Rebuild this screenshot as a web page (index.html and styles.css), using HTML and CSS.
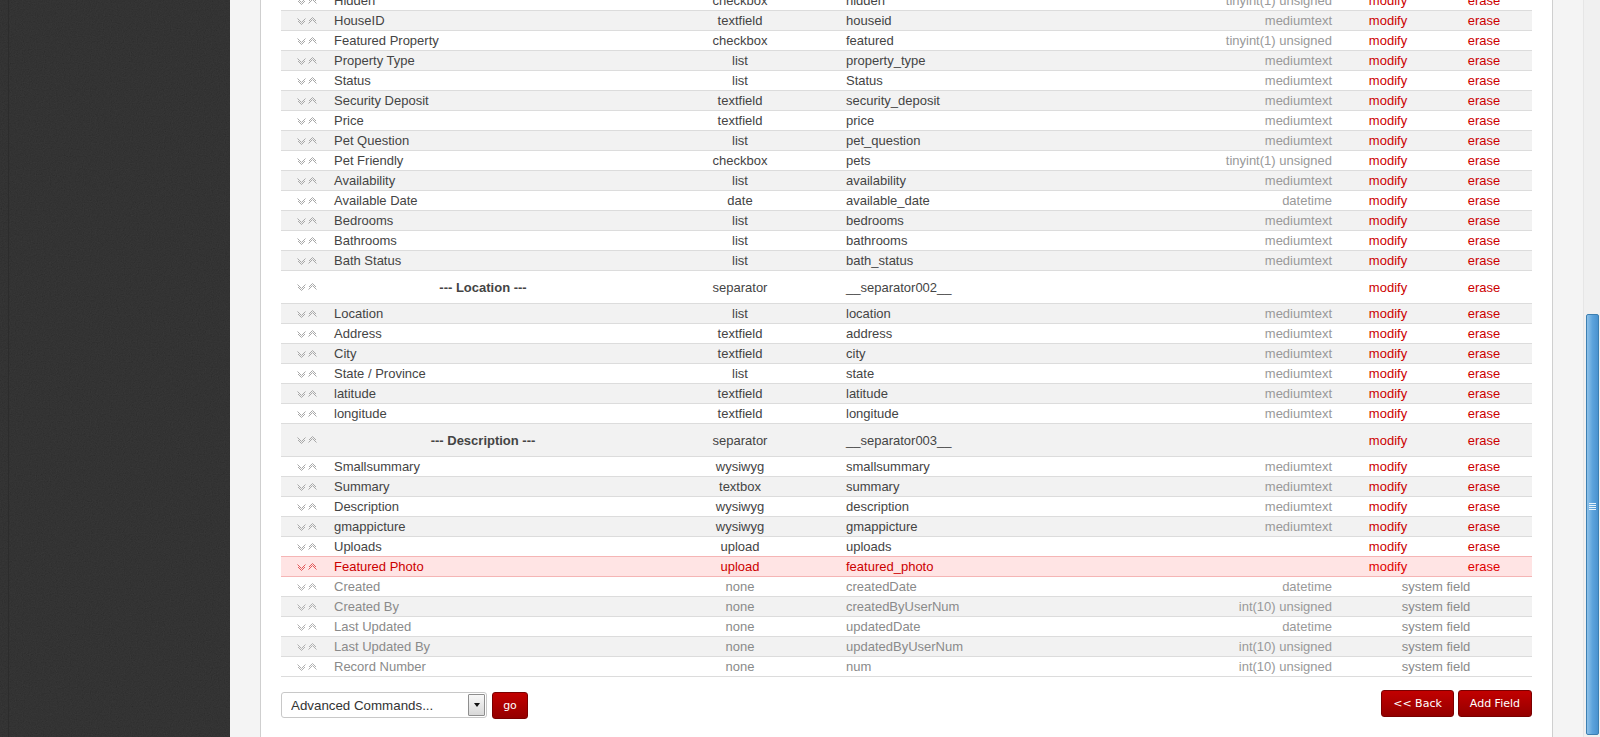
FILE: index.html
```html
<!DOCTYPE html>
<html lang="en">
<head>
    <meta charset="UTF-8">
    <meta name="viewport" content="width=device-width, initial-scale=1.0">
    <title>Section Editor - Fields</title>
    <link rel="stylesheet" href="styles.css">
</head>
<body>
    <div id="sidebar">
        <svg class="noise" width="230" height="737" aria-hidden="true">
            <filter id="grain">
                <feTurbulence type="fractalNoise" baseFrequency="0.85" numOctaves="2" stitchTiles="stitch"/>
                <feColorMatrix values="0.33 0.33 0.33 0 0  0.33 0.33 0.33 0 0  0.33 0.33 0.33 0 0  0 0 0 0 0.14"/>
            </filter>
            <rect width="230" height="737" fill="#1d1d1d"/>
            <rect width="230" height="737" filter="url(#grain)"/>
            <rect x="8" width="1" height="737" fill="#2c2c2c"/>
        </svg>
    </div>

    <div id="stage">
        <div id="panel">
            <svg width="0" height="0" class="defs" aria-hidden="true">
                <symbol id="updown" viewBox="0 0 20 8">
                    <path d="M0.5 1.5 L4.5 5.5 L8.5 1.5 M1 4 L4.5 7.5 L8 4" fill="none" stroke="currentColor" stroke-width="1"/>
                    <path d="M11.5 6.5 L15.5 2.5 L19.5 6.5 M12 4 L15.5 0.5 L19 4" fill="none" stroke="currentColor" stroke-width="1"/>
                </symbol>
            </svg>

            <table class="fields">
                <colgroup>
                    <col class="c-drag"><col class="c-label"><col class="c-ftype"><col class="c-fname"><col class="c-type"><col class="c-act"><col class="c-act">
                </colgroup>
                <tbody>
                    <tr><td class="drag"><svg><use href="#updown"/></svg></td><td>Hidden</td><td class="ftype">checkbox</td><td>hidden</td><td class="type">tinyint(1) unsigned</td><td class="act">modify</td><td class="act">erase</td></tr>
                    <tr><td class="drag"><svg><use href="#updown"/></svg></td><td>HouseID</td><td class="ftype">textfield</td><td>houseid</td><td class="type">mediumtext</td><td class="act">modify</td><td class="act">erase</td></tr>
                    <tr><td class="drag"><svg><use href="#updown"/></svg></td><td>Featured Property</td><td class="ftype">checkbox</td><td>featured</td><td class="type">tinyint(1) unsigned</td><td class="act">modify</td><td class="act">erase</td></tr>
                    <tr><td class="drag"><svg><use href="#updown"/></svg></td><td>Property Type</td><td class="ftype">list</td><td>property_type</td><td class="type">mediumtext</td><td class="act">modify</td><td class="act">erase</td></tr>
                    <tr><td class="drag"><svg><use href="#updown"/></svg></td><td>Status</td><td class="ftype">list</td><td>Status</td><td class="type">mediumtext</td><td class="act">modify</td><td class="act">erase</td></tr>
                    <tr><td class="drag"><svg><use href="#updown"/></svg></td><td>Security Deposit</td><td class="ftype">textfield</td><td>security_deposit</td><td class="type">mediumtext</td><td class="act">modify</td><td class="act">erase</td></tr>
                    <tr><td class="drag"><svg><use href="#updown"/></svg></td><td>Price</td><td class="ftype">textfield</td><td>price</td><td class="type">mediumtext</td><td class="act">modify</td><td class="act">erase</td></tr>
                    <tr><td class="drag"><svg><use href="#updown"/></svg></td><td>Pet Question</td><td class="ftype">list</td><td>pet_question</td><td class="type">mediumtext</td><td class="act">modify</td><td class="act">erase</td></tr>
                    <tr><td class="drag"><svg><use href="#updown"/></svg></td><td>Pet Friendly</td><td class="ftype">checkbox</td><td>pets</td><td class="type">tinyint(1) unsigned</td><td class="act">modify</td><td class="act">erase</td></tr>
                    <tr><td class="drag"><svg><use href="#updown"/></svg></td><td>Availability</td><td class="ftype">list</td><td>availability</td><td class="type">mediumtext</td><td class="act">modify</td><td class="act">erase</td></tr>
                    <tr><td class="drag"><svg><use href="#updown"/></svg></td><td>Available Date</td><td class="ftype">date</td><td>available_date</td><td class="type">datetime</td><td class="act">modify</td><td class="act">erase</td></tr>
                    <tr><td class="drag"><svg><use href="#updown"/></svg></td><td>Bedrooms</td><td class="ftype">list</td><td>bedrooms</td><td class="type">mediumtext</td><td class="act">modify</td><td class="act">erase</td></tr>
                    <tr><td class="drag"><svg><use href="#updown"/></svg></td><td>Bathrooms</td><td class="ftype">list</td><td>bathrooms</td><td class="type">mediumtext</td><td class="act">modify</td><td class="act">erase</td></tr>
                    <tr><td class="drag"><svg><use href="#updown"/></svg></td><td>Bath Status</td><td class="ftype">list</td><td>bath_status</td><td class="type">mediumtext</td><td class="act">modify</td><td class="act">erase</td></tr>
                    <tr class="separator"><td class="drag"><svg><use href="#updown"/></svg></td><td class="sep-label">--- Location ---</td><td class="ftype">separator</td><td>__separator002__</td><td class="type"></td><td class="act">modify</td><td class="act">erase</td></tr>
                    <tr><td class="drag"><svg><use href="#updown"/></svg></td><td>Location</td><td class="ftype">list</td><td>location</td><td class="type">mediumtext</td><td class="act">modify</td><td class="act">erase</td></tr>
                    <tr><td class="drag"><svg><use href="#updown"/></svg></td><td>Address</td><td class="ftype">textfield</td><td>address</td><td class="type">mediumtext</td><td class="act">modify</td><td class="act">erase</td></tr>
                    <tr><td class="drag"><svg><use href="#updown"/></svg></td><td>City</td><td class="ftype">textfield</td><td>city</td><td class="type">mediumtext</td><td class="act">modify</td><td class="act">erase</td></tr>
                    <tr><td class="drag"><svg><use href="#updown"/></svg></td><td>State / Province</td><td class="ftype">list</td><td>state</td><td class="type">mediumtext</td><td class="act">modify</td><td class="act">erase</td></tr>
                    <tr><td class="drag"><svg><use href="#updown"/></svg></td><td>latitude</td><td class="ftype">textfield</td><td>latitude</td><td class="type">mediumtext</td><td class="act">modify</td><td class="act">erase</td></tr>
                    <tr><td class="drag"><svg><use href="#updown"/></svg></td><td>longitude</td><td class="ftype">textfield</td><td>longitude</td><td class="type">mediumtext</td><td class="act">modify</td><td class="act">erase</td></tr>
                    <tr class="separator"><td class="drag"><svg><use href="#updown"/></svg></td><td class="sep-label">--- Description ---</td><td class="ftype">separator</td><td>__separator003__</td><td class="type"></td><td class="act">modify</td><td class="act">erase</td></tr>
                    <tr><td class="drag"><svg><use href="#updown"/></svg></td><td>Smallsummary</td><td class="ftype">wysiwyg</td><td>smallsummary</td><td class="type">mediumtext</td><td class="act">modify</td><td class="act">erase</td></tr>
                    <tr><td class="drag"><svg><use href="#updown"/></svg></td><td>Summary</td><td class="ftype">textbox</td><td>summary</td><td class="type">mediumtext</td><td class="act">modify</td><td class="act">erase</td></tr>
                    <tr><td class="drag"><svg><use href="#updown"/></svg></td><td>Description</td><td class="ftype">wysiwyg</td><td>description</td><td class="type">mediumtext</td><td class="act">modify</td><td class="act">erase</td></tr>
                    <tr><td class="drag"><svg><use href="#updown"/></svg></td><td>gmappicture</td><td class="ftype">wysiwyg</td><td>gmappicture</td><td class="type">mediumtext</td><td class="act">modify</td><td class="act">erase</td></tr>
                    <tr class="before-hl"><td class="drag"><svg><use href="#updown"/></svg></td><td>Uploads</td><td class="ftype">upload</td><td>uploads</td><td class="type"></td><td class="act">modify</td><td class="act">erase</td></tr>
                    <tr class="highlight"><td class="drag"><svg><use href="#updown"/></svg></td><td>Featured Photo</td><td class="ftype">upload</td><td>featured_photo</td><td class="type"></td><td class="act">modify</td><td class="act">erase</td></tr>
                    <tr class="system"><td class="drag"><svg><use href="#updown"/></svg></td><td>Created</td><td class="ftype">none</td><td>createdDate</td><td class="type">datetime</td><td class="act" colspan="2">system field</td></tr>
                    <tr class="system"><td class="drag"><svg><use href="#updown"/></svg></td><td>Created By</td><td class="ftype">none</td><td>createdByUserNum</td><td class="type">int(10) unsigned</td><td class="act" colspan="2">system field</td></tr>
                    <tr class="system"><td class="drag"><svg><use href="#updown"/></svg></td><td>Last Updated</td><td class="ftype">none</td><td>updatedDate</td><td class="type">datetime</td><td class="act" colspan="2">system field</td></tr>
                    <tr class="system"><td class="drag"><svg><use href="#updown"/></svg></td><td>Last Updated By</td><td class="ftype">none</td><td>updatedByUserNum</td><td class="type">int(10) unsigned</td><td class="act" colspan="2">system field</td></tr>
                    <tr class="system"><td class="drag"><svg><use href="#updown"/></svg></td><td>Record Number</td><td class="ftype">none</td><td>num</td><td class="type">int(10) unsigned</td><td class="act" colspan="2">system field</td></tr>
                </tbody>
            </table>

            <div class="footer">
                <div class="commands">
                    <div class="select-box">
                        <select id="advanced-commands">
                            <option>Advanced Commands...</option>
                        </select>
                        <span class="select-arrow"></span>
                    </div>
                    <button class="btn btn-go">go</button>
                </div>
                <div class="actions">
                    <button class="btn">&lt;&lt; Back</button>
                    <button class="btn">Add Field</button>
                </div>
            </div>
        </div>
    </div>

    <div id="scrollbar">
        <div class="thumb"><span class="grip"></span></div>
    </div>
</body>
</html>
```

FILE: styles.css
```css
body { margin: 0; height: 737px; overflow: hidden; display: flex; font-family: "Liberation Sans", Arial, sans-serif; font-size: 13px; color: #444; background: #f4f4f4; }

#sidebar { width: 230px; flex: none; background: #1d1d1d; overflow: hidden; }
#sidebar .noise { display: block; }

#stage { flex: 1; display: flex; padding: 0 30px; background: #f4f4f4; }
#panel { flex: 1; background: #fff; border-left: 1px solid #cfcfcf; border-right: 1px solid #cfcfcf; padding: 0 20px; }
.defs { position: absolute; }

.fields { width: 100%; table-layout: fixed; border-collapse: separate; border-spacing: 0; margin-top: -9px; }
.fields .c-drag { width: 48px; }
.fields .c-label { width: 308px; }
.fields .c-ftype { width: 206px; }
.fields .c-fname { width: 297px; }
.fields .c-type { width: 200px; }
.fields .c-act { width: 96px; }
.fields td { padding: 0 0 0 3px; line-height: 19px; border-bottom: 1px solid #dcdcdc; white-space: nowrap; overflow: hidden; }
.fields td:nth-child(2) { padding-left: 5px; }
.fields tr:nth-child(even) td { background: #f2f2f2; }
.fields td.drag { padding: 0 0 0 16px; color: #a8a8a8; }
.fields td.drag svg { width: 20px; height: 8px; display: block; }
.fields td.ftype { text-align: center; padding: 0; }
.fields td.type { text-align: right; padding: 0 8px 0 0; color: #999; }
.fields td.act { text-align: center; padding: 0; color: #cc0000; }

.fields tr.separator td { line-height: 30px; padding-top: 2px; }
.fields tr.separator td.drag { padding-top: 0; }
.fields td.sep-label { text-align: center; font-weight: bold; padding: 0; }

.fields tr.before-hl td { border-bottom-color: #f5b5b5; }
.fields tr.highlight td { background: #ffe4e4; color: #cc0000; border-bottom-color: #f5b5b5; }
.fields tr.highlight td.drag { color: #e25a5a; }
.fields tr.highlight td.act { color: #e00000; }

.fields tr.system td { color: #8a8a8a; }
.fields tr.system td.drag { color: #b0b0b0; }
.fields tr.system td.type { color: #999; }

.footer { display: flex; justify-content: space-between; align-items: flex-start; margin-top: 13px; }
.commands { display: flex; gap: 5px; margin-top: 2px; }
.actions { display: flex; gap: 4px; }

.select-box { display: flex; width: 206px; height: 26px; box-sizing: border-box; border: 1px solid #c8c8c8; border-radius: 3px; background: #fff; padding: 1px; }
.select-box select { flex: 1; -webkit-appearance: none; appearance: none; border: none; background: transparent; font-family: "Liberation Sans", Arial, sans-serif; font-size: 13.33px; color: #333; padding: 0 0 0 8px; outline: none; }
.select-arrow { width: 15px; border: 1px solid #8e8e8e; border-radius: 1px; background: linear-gradient(#f8f8f8, #d8d8d8); display: flex; align-items: center; justify-content: center; }
.select-arrow::after { content: ""; border-left: 3.5px solid transparent; border-right: 3.5px solid transparent; border-top: 4px solid #111; }

.btn { height: 27px; padding: 0 11px; border: 1px solid #7a0000; border-radius: 3px; background: linear-gradient(#c20000, #940000); color: #fff; font-family: "DejaVu Sans", Verdana, sans-serif; font-size: 11px; cursor: pointer; }
.btn-go { width: 36px; padding: 0; }

#scrollbar { width: 17px; flex: none; background: #f0f0f0; border-left: 1px solid #e6e6e6; box-sizing: border-box; display: flex; flex-direction: column; justify-content: flex-end; padding: 0 1px 2px 2px; }
#scrollbar .thumb { height: 421px; border: 1px solid #3c7fb1; border-radius: 2px; background: linear-gradient(90deg, #8fc2e9, #5ca3dc 50%, #4a92cf); display: flex; align-items: center; justify-content: center; padding-bottom: 36px; box-sizing: border-box; }
#scrollbar .grip { width: 7px; height: 7px; background: repeating-linear-gradient(#e8f3fb 0 1px, transparent 1px 2px); }
```
